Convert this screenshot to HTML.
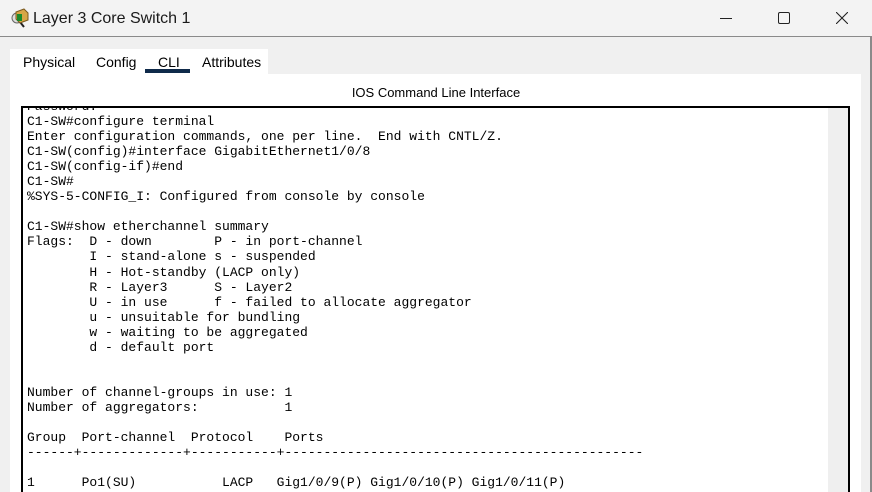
<!DOCTYPE html>
<html><head><style>
*{margin:0;padding:0;box-sizing:border-box}
html,body{width:872px;height:492px;overflow:hidden}
body{background:#f0f0f0;font-family:"Liberation Sans",sans-serif;position:relative}
.title{position:absolute;left:0;top:0;width:872px;height:37px;background:#f3f3f3;border-bottom:1px solid #8a8a8a}
.title .t{position:absolute;left:33px;top:10px;font-size:16px;color:#1a1a1a}
.rb{position:absolute;left:870px;top:37px;width:2px;height:455px;background:#8a8a8a}
.tabs{position:absolute;left:10px;top:49px;width:258px;height:25px;background:#fff}
.tab{position:absolute;top:5px;font-size:14px;color:#000}
.ul{position:absolute;left:145px;top:69px;width:45px;height:4px;background:#0f2a4a}
.panel{position:absolute;left:10px;top:74px;width:851px;height:418px;background:#fff}
.hdr{position:absolute;left:0;width:872px;top:85px;text-align:center;font-size:13px}
.term{position:absolute;left:21px;top:106px;width:829px;height:386px;border:2px solid #000;border-bottom:none;overflow:hidden;background:#fff}
.sb{position:absolute;right:0;top:0;width:20px;height:100%;background:#efefef}
pre{position:absolute;left:4px;top:-9px;font-family:"Liberation Mono",monospace;font-size:13px;line-height:15.05px;color:#000}
</style></head><body>
<div class="title">
<svg style="position:absolute;left:10px;top:7px" width="20" height="22" viewBox="0 0 20 22"><circle cx="7" cy="11" r="5" fill="#ddd" stroke="#666"/><line x1="10" y1="15" x2="14" y2="20" stroke="#222" stroke-width="2"/><polygon points="6,5 14,2 18,6 18,13 10,16 6,12" fill="#d7a645" stroke="#7a5a20"/><rect x="7" y="7" width="5" height="7" fill="#1a8a2a"/></svg>
<div class="t">Layer 3 Core Switch 1</div>
<div style="position:absolute;left:720px;top:18px;width:12px;height:1px;background:#222"></div>
<div style="position:absolute;left:778px;top:12px;width:12px;height:12px;border:1px solid #222;border-radius:2px"></div>
<svg style="position:absolute;left:836px;top:12px" width="12" height="12"><path d="M0 0L12 12M12 0L0 12" stroke="#222" stroke-width="1.1"/></svg>
</div>
<div class="rb"></div>
<div class="tabs">
<span class="tab" style="left:13px">Physical</span>
<span class="tab" style="left:86px">Config</span>
<span class="tab" style="left:148px">CLI</span>
<span class="tab" style="left:192px">Attributes</span>
</div>
<div class="ul"></div>
<div class="panel"></div>
<div class="hdr">IOS Command Line Interface</div>
<div class="term"><div class="sb"></div>
<pre>Password:
C1-SW#configure terminal
Enter configuration commands, one per line.  End with CNTL/Z.
C1-SW(config)#interface GigabitEthernet1/0/8
C1-SW(config-if)#end
C1-SW#
%SYS-5-CONFIG_I: Configured from console by console

C1-SW#show etherchannel summary
Flags:  D - down        P - in port-channel
        I - stand-alone s - suspended
        H - Hot-standby (LACP only)
        R - Layer3      S - Layer2
        U - in use      f - failed to allocate aggregator
        u - unsuitable for bundling
        w - waiting to be aggregated
        d - default port


Number of channel-groups in use: 1
Number of aggregators:           1

Group  Port-channel  Protocol    Ports
------+-------------+-----------+----------------------------------------------

1      Po1(SU)           LACP   Gig1/0/9(P) Gig1/0/10(P) Gig1/0/11(P)
</pre></div>
</body></html>
